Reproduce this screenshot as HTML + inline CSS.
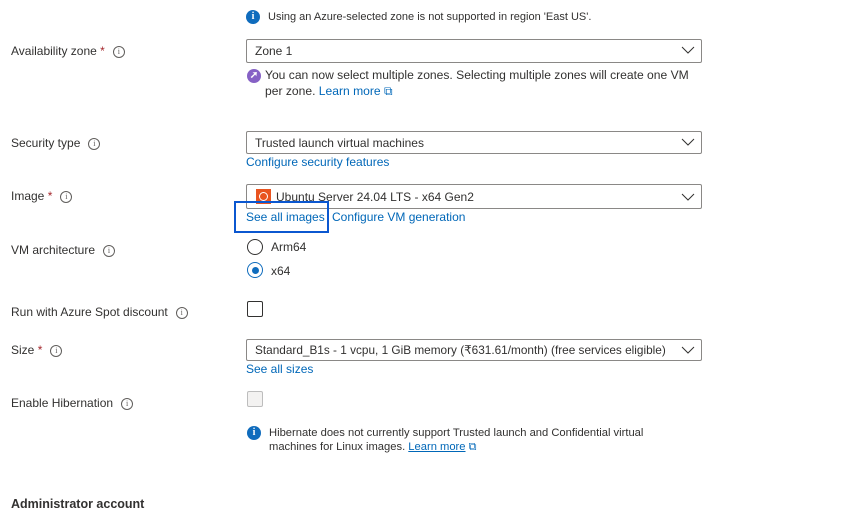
<!DOCTYPE html>
<html><head><meta charset="utf-8"><style>
body{margin:0;width:847px;height:517px;background:#fff;position:relative;overflow:hidden;font-family:"Liberation Sans",sans-serif;font-size:12px;color:#323130}
.a{position:absolute;white-space:nowrap;line-height:16px}
.lbl{left:11px}
.req{color:#a4262c}
.i{display:inline-block;width:10px;height:10px;border:1px solid #605e5c;border-radius:50%;font-size:8px;line-height:10px;text-align:center;margin-left:8px;vertical-align:1px;color:#605e5c;font-family:"Liberation Serif",serif}
.box{position:absolute;left:246px;width:456px;border:1px solid #8a8886;border-radius:2px;height:22px;box-sizing:border-box}
.box span{position:absolute;left:8px;top:3px;line-height:16px;white-space:nowrap}
.chev{position:absolute;right:6px;top:5px}
.lk{color:#0067b8}
.bi{position:absolute;width:14px;height:14px;border-radius:50%;background:#0f6cbd;color:#fff;font-weight:bold;font-size:10px;line-height:14px;text-align:center;font-family:"Liberation Serif",serif}
</style></head><body>
<div class="bi" style="left:246px;top:10px">i</div>
<div class="a" style="left:268px;top:9px;font-size:11px">Using an Azure-selected zone is not supported in region 'East US'.</div>

<div class="a lbl" style="top:43px">Availability zone <span class="req">*</span><span class="i">i</span></div>
<div class="box" style="top:39px;height:24px"><span>Zone 1</span><svg class="chev" width="14" height="10"><path d="M1 2l6 6 6-6" fill="none" stroke="#323130"/></svg></div>
<div class="bi" style="left:247px;top:69px;background:#8661c5">➚</div>
<div class="a" style="left:265px;top:67px;font-size:12.1px">You can now select multiple zones. Selecting multiple zones will create one VM</div>
<div class="a" style="left:265px;top:83px;font-size:12.1px">per zone. <span class="lk">Learn more ⧉</span></div>

<div class="a lbl" style="top:135px">Security type<span class="i">i</span></div>
<div class="box" style="top:131px;height:23px"><span>Trusted launch virtual machines</span><svg class="chev" width="14" height="10"><path d="M1 2l6 6 6-6" fill="none" stroke="#323130"/></svg></div>
<div class="a lk" style="left:246px;top:154px">Configure security features</div>

<div class="a lbl" style="top:188px">Image <span class="req">*</span><span class="i">i</span></div>
<div class="box" style="top:184px;height:25px"><div style="position:absolute;left:9px;top:4px;width:15px;height:15px;background:#e95420"><div style="position:absolute;left:3px;top:3px;width:7px;height:7px;border:1.5px solid #fff;border-radius:50%"></div></div><span style="left:29px;top:4px">Ubuntu Server 24.04 LTS - x64 Gen2</span><svg class="chev" style="top:7px" width="14" height="10"><path d="M1 2l6 6 6-6" fill="none" stroke="#323130"/></svg></div>
<div class="a lk" style="left:246px;top:209px">See all images</div>
<div class="a lk" style="left:332px;top:209px">Configure VM generation</div>
<div style="position:absolute;left:234px;top:201px;width:91px;height:28px;border:2px solid #0b57d0"></div>

<div class="a lbl" style="top:242px">VM architecture<span class="i">i</span></div>
<div style="position:absolute;left:247px;top:239px;width:14px;height:14px;border:1px solid #323130;border-radius:50%"></div>
<div class="a" style="left:271px;top:239px">Arm64</div>
<div style="position:absolute;left:247px;top:262px;width:14px;height:14px;border:1px solid #0f6cbd;border-radius:50%"><div style="position:absolute;left:3.5px;top:3.5px;width:7px;height:7px;background:#0f6cbd;border-radius:50%"></div></div>
<div class="a" style="left:271px;top:263px">x64</div>

<div class="a lbl" style="top:304px">Run with Azure Spot discount<span class="i">i</span></div>
<div style="position:absolute;left:247px;top:301px;width:14px;height:14px;border:1px solid #323130;border-radius:2px"></div>

<div class="a lbl" style="top:342px">Size <span class="req">*</span><span class="i">i</span></div>
<div class="box" style="top:339px;height:22px"><span style="top:2px;font-size:11.8px">Standard_B1s - 1 vcpu, 1 GiB memory (₹631.61/month) (free services eligible)</span><svg class="chev" width="14" height="10"><path d="M1 2l6 6 6-6" fill="none" stroke="#323130"/></svg></div>
<div class="a lk" style="left:246px;top:361px">See all sizes</div>

<div class="a lbl" style="top:395px">Enable Hibernation<span class="i">i</span></div>
<div style="position:absolute;left:247px;top:391px;width:14px;height:14px;border:1px solid #bdbdbd;background:#f3f2f1;border-radius:2px"></div>

<div class="bi" style="left:247px;top:426px">i</div>
<div class="a" style="left:269px;top:425px;font-size:11.2px">Hibernate does not currently support Trusted launch and Confidential virtual</div>
<div class="a" style="left:269px;top:439px;font-size:11.2px">machines for Linux images. <span class="lk" style="text-decoration:underline">Learn more</span> <span class="lk">⧉</span></div>

<div class="a" style="left:11px;top:496px;font-size:12.5px;font-weight:bold;color:#323130">Administrator account</div>
</body></html>
